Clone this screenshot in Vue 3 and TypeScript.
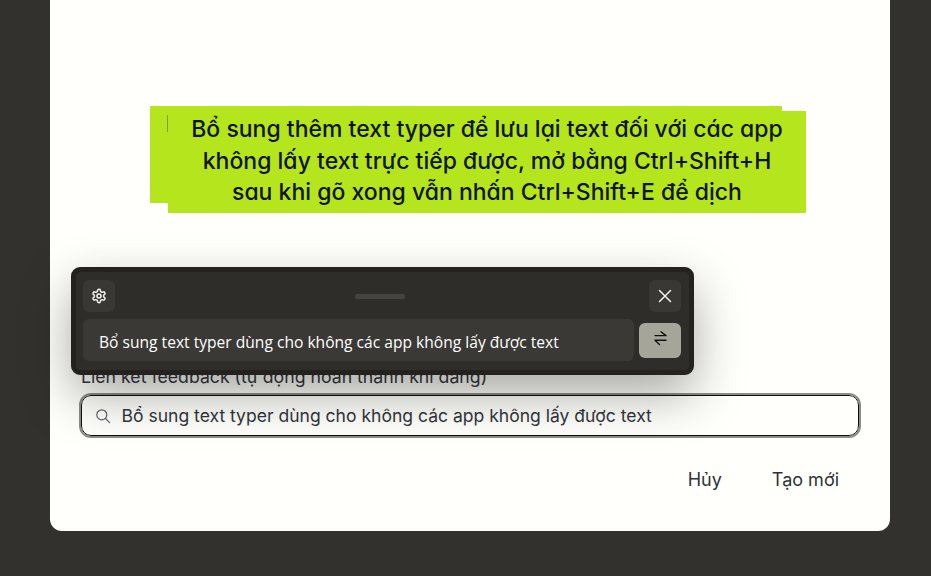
<script setup lang="ts">
const message = 'Bổ sung text typer dùng cho không các app không lấy được text'
const bannerLines = [
  'Bổ sung thêm text typer để lưu lại text đối với các app',
  'không lấy text trực tiếp được, mở bằng Ctrl+Shift+H',
  'sau khi gõ xong vẫn nhấn Ctrl+Shift+E để dịch',
]
</script>

<template>
  <div class="page">
    <main class="modal">
      <section class="banner">
        <div class="banner-back"></div>
        <div class="banner-tick"></div>
        <div class="banner-front">
          <p v-for="line in bannerLines" :key="line">{{ line }}</p>
        </div>
      </section>

      <label class="label">Liên kết feedback (tự động hoàn thành khi đang)</label>
      <div class="search">
        <svg class="search-icon" viewBox="0 0 16 16" fill="none" stroke="currentColor" stroke-width="1.2" stroke-linecap="round">
          <circle cx="6.8" cy="6.8" r="5" />
          <path d="M10.5 10.5 14.6 14.6" />
        </svg>
        <span>{{ message }}</span>
      </div>

      <footer class="footer">
        <button class="text-btn">Hủy</button>
        <button class="text-btn">Tạo mới</button>
      </footer>
    </main>

    <aside class="widget">
      <div class="widget-top">
        <button class="icon-btn" aria-label="Cài đặt">
          <svg width="16" height="16" viewBox="0 0 24 24" fill="none" stroke="currentColor" stroke-width="2.3" stroke-linecap="round" stroke-linejoin="round">
            <path d="M12.22 2h-.44a2 2 0 0 0-2 2v.18a2 2 0 0 1-1 1.73l-.43.25a2 2 0 0 1-2 0l-.15-.08a2 2 0 0 0-2.73.73l-.22.38a2 2 0 0 0 .73 2.73l.15.1a2 2 0 0 1 1 1.72v.51a2 2 0 0 1-1 1.74l-.15.09a2 2 0 0 0-.73 2.73l.22.38a2 2 0 0 0 2.73.73l.15-.08a2 2 0 0 1 2 0l.43.25a2 2 0 0 1 1 1.73V20a2 2 0 0 0 2 2h.44a2 2 0 0 0 2-2v-.18a2 2 0 0 1 1-1.73l.43-.25a2 2 0 0 1 2 0l.15.08a2 2 0 0 0 2.73-.73l.22-.39a2 2 0 0 0-.73-2.73l-.15-.08a2 2 0 0 1-1-1.74v-.5a2 2 0 0 1 1-1.74l.15-.09a2 2 0 0 0 .73-2.73l-.22-.38a2 2 0 0 0-2.73-.73l-.15.08a2 2 0 0 1-2 0l-.43-.25a2 2 0 0 1-1-1.73V4a2 2 0 0 0-2-2z" />
            <circle cx="12" cy="12" r="3" />
          </svg>
        </button>
        <div class="handle"></div>
        <button class="icon-btn" aria-label="Đóng">
          <svg width="16" height="16" viewBox="0 0 16 16" fill="none" stroke="currentColor" stroke-width="1.5" stroke-linecap="round">
            <path d="M2.5 2.5 13.5 13.5M13.5 2.5 2.5 13.5" />
          </svg>
        </button>
      </div>
      <div class="widget-row">
        <div class="widget-input">{{ message }}</div>
        <button class="swap" aria-label="Dịch">
          <svg width="18" height="18" viewBox="0 0 18 18" fill="none" stroke="currentColor" stroke-width="1.35" stroke-linecap="round" stroke-linejoin="round">
            <path d="M10 0.8 15 4.6H4" />
            <path d="M15 9.2H4L8.5 13.5" />
          </svg>
        </button>
      </div>
    </aside>
  </div>
</template>

<style scoped>
.page {
  position: relative;
  width: 931px;
  height: 576px;
  overflow: hidden;
  background: #32312d;
  font-family: Inter, "Noto Sans", sans-serif;
}
.modal {
  width: 840px;
  height: 531px;
  margin-left: 50px;
  padding: 111px 30px 0;
  box-sizing: border-box;
  display: flex;
  flex-direction: column;
  background: #fffffb;
  border-radius: 0 0 12px 12px;
}
.banner {
  position: relative;
  margin-left: 88px;
  width: 638px;
  height: 102px;
}
.banner-back {
  position: absolute;
  left: -18px;
  top: -5px;
  width: 632px;
  height: 97px;
  background: #b5e61d;
}
.banner-tick {
  position: absolute;
  left: -1px;
  top: 4px;
  width: 1px;
  height: 17px;
  background: #7e9f24;
}
.banner-front {
  position: relative;
  height: 102px;
  padding-top: 3px;
  box-sizing: border-box;
  background: #b5e61d;
  text-align: center;
  font-family: Inter, sans-serif;
  font-feature-settings: "cv11" 1;
  font-size: 23px;
  line-height: 31.5px;
  font-weight: 500;
  color: #101408;
}
.banner-front p {
  margin: 0;
  white-space: nowrap;
}
.label {
  margin-top: 154px;
  margin-left: 1px;
  height: 20px;
  line-height: 20px;
  font-size: 17.7px;
  color: #33363d;
  white-space: nowrap;
}
.search {
  display: flex;
  align-items: center;
  gap: 11px;
  width: 778px;
  height: 41px;
  margin-top: 8px;
  margin-left: 1px;
  padding-left: 12.5px;
  box-sizing: border-box;
  border: 1.5px solid #0e0e0c;
  outline: 2px solid #8d8d86;
  outline-offset: 0;
  border-radius: 10px;
  font-size: 17.54px;
  color: #33363d;
  white-space: nowrap;
}
.search-icon {
  width: 16px;
  height: 16px;
  color: #5f6268;
  flex: none;
}
.footer {
  display: flex;
  justify-content: flex-end;
  gap: 50px;
  margin-top: 32px;
  padding-right: 21px;
}
.text-btn {
  padding: 0;
  border: 0;
  background: none;
  font: 400 18px/24px Inter, sans-serif;
  color: #2f323a;
}
.widget {
  position: absolute;
  left: 71px;
  top: 267px;
  width: 623px;
  height: 108px;
  padding: 8px 8px 0 7px;
  box-sizing: border-box;
  background: #2e2d29;
  border: 5px solid #23221f;
  border-radius: 9px;
  box-shadow: 0 20px 50px rgba(0, 0, 0, 0.34);
}
.widget-top {
  display: flex;
  align-items: center;
  justify-content: space-between;
  position: relative;
  height: 32px;
}
.handle {
  position: absolute;
  left: 272px;
  top: 14px;
  width: 50px;
  height: 5px;
  border-radius: 3px;
  background: #454440;
}
.icon-btn {
  display: flex;
  align-items: center;
  justify-content: center;
  width: 32px;
  height: 32px;
  padding: 0;
  border: 0;
  border-radius: 6px;
  background: #393834;
  color: #f4f4ee;
}
.widget-row {
  display: flex;
  align-items: center;
  gap: 5px;
  margin-top: 7px;
}
.widget-input {
  width: 551px;
  height: 42px;
  padding-left: 16px;
  box-sizing: border-box;
  border-radius: 6px;
  background: #3a3935;
  font: 15.6px/46px "Open Sans", sans-serif;
  color: #ffffff;
  white-space: nowrap;
}
.swap {
  display: flex;
  align-items: center;
  justify-content: center;
  width: 42px;
  height: 35px;
  padding: 0;
  border: 0;
  border-radius: 6px;
  background: #a5a699;
  color: #111;
}
</style>
